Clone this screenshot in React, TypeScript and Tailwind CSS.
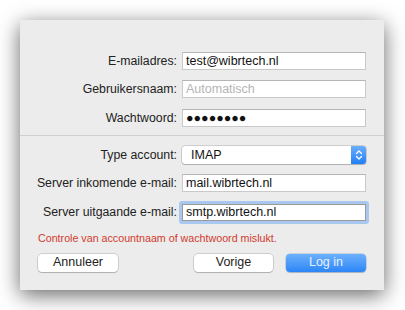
import { ReactNode } from 'react';

const font = { fontFamily: '"Liberation Sans", Arial, sans-serif' };

function Row({ label, children, className = '' }: { label: string; children: ReactNode; className?: string }) {
    return (
        <div className={`flex items-center ${className}`}>
            <div className="w-[157px] text-right text-[12.3px] text-[#222] leading-none">{label}</div>
            <div className="w-[184px] ml-[5px]">{children}</div>
        </div>
    );
}

function Field({ value, placeholder = false, focused = false }: { value: string; placeholder?: boolean; focused?: boolean }) {
    if (focused) {
        return (
            <div className="-mx-[3px] -my-[3px] rounded-[3px] border-[3px] border-[#a8c8f0]">
                <div className="h-[17px] bg-white border border-[#9a9a9a] flex items-center px-[3px] text-[12.5px] text-[#111]">{value}</div>
            </div>
        );
    }
    return (
        <div
            className={`h-[18px] bg-white border border-[#c9c9c9] border-t-[#b5b5b5] flex items-center px-[3px] text-[12.5px] ${
                placeholder ? 'text-[#b4b4b4]' : 'text-[#111]'
            }`}
        >
            {value}
        </div>
    );
}

const btn = 'h-[18px] bg-white rounded-[4px] shadow-[0_0_0_0.5px_rgba(0,0,0,0.25),0_1px_1px_rgba(0,0,0,0.15)] text-[12.5px] text-[#222] leading-none';

export default function App() {
    return (
        <div className="w-[405px] h-[310px] bg-white pt-[20px] pl-[20px]" style={font}>
            <div className="w-[364px] h-[270px] bg-[#ececec] shadow-[0_5px_20px_rgba(0,0,0,0.6)] flex flex-col">
                <div className="pt-[32px] flex flex-col">
                    <Row label="E-mailadres:">
                        <Field value="test@wibrtech.nl" />
                    </Row>
                    <Row label="Gebruikersnaam:" className="mt-[10px]">
                        <Field value="Automatisch" placeholder />
                    </Row>
                    <Row label="Wachtwoord:" className="mt-[11px]">
                        <Field value="●●●●●●●●" />
                    </Row>
                </div>

                <div className="mt-[8px] h-px bg-[#d0d0d0]" />

                <div className="pt-[10px] flex flex-col">
                    <Row label="Type account:">
                        <div className="h-[18px] bg-white rounded-[3px] shadow-[0_0_0_0.5px_rgba(0,0,0,0.25),0_1px_1px_rgba(0,0,0,0.15)] flex items-center">
                            <span className="flex-1 pl-[9px] text-[12.5px] text-[#111]">IMAP</span>
                            <div className="w-[15px] h-[18px] rounded-r-[3px] bg-gradient-to-b from-[#6aaefb] to-[#1f7ff6] flex items-center justify-center">
                                <svg width="8" height="12" viewBox="0 0 8 12" fill="none">
                                    <path d="M1.5 4.5 L4 2 L6.5 4.5" stroke="white" strokeWidth="1.3" strokeLinecap="round" strokeLinejoin="round" />
                                    <path d="M1.5 7.5 L4 10 L6.5 7.5" stroke="white" strokeWidth="1.3" strokeLinecap="round" strokeLinejoin="round" />
                                </svg>
                            </div>
                        </div>
                    </Row>
                    <Row label="Server inkomende e-mail:" className="mt-[10px]">
                        <Field value="mail.wibrtech.nl" />
                    </Row>
                    <Row label="Server uitgaande e-mail:" className="mt-[12px]">
                        <Field value="smtp.wibrtech.nl" focused />
                    </Row>
                </div>

                <div className="mt-[12px] pl-[18px] text-[10.7px] text-[#d23a2e] leading-none">
                    Controle van accountnaam of wachtwoord mislukt.
                </div>

                <div className="mt-[10px] flex items-center pl-[18px] pr-[18px]">
                    <button className={`w-[80px] ${btn}`}>Annuleer</button>
                    <button className={`ml-auto w-[79px] ${btn}`}>Vorige</button>
                    <button className="ml-[13px] w-[80px] h-[18px] rounded-[4px] bg-gradient-to-b from-[#6cb0fb] to-[#2a86f7] shadow-[0_0_0_0.5px_rgba(0,60,160,0.3),0_1px_1px_rgba(0,0,0,0.15)] text-[12.5px] text-[#e8f1ff] leading-none">
                        Log in
                    </button>
                </div>
            </div>
        </div>
    );
}
